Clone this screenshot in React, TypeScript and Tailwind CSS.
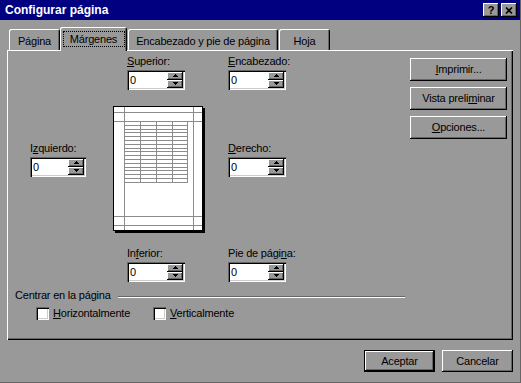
import { ReactNode } from "react";

const raised = "shadow-[inset_-1px_-1px_0_#000,inset_1px_1px_0_#fff,inset_-2px_-2px_0_#666]";
const sunken = "shadow-[inset_1px_1px_0_#666,inset_2px_2px_0_#000,inset_-1px_-1px_0_#fff,inset_-2px_-2px_0_#ccc]";

function Arrow({ up }: { up?: boolean }) {
    return (
        <svg width="5" height="3" viewBox="0 0 5 3" shapeRendering="crispEdges">
            {up ? <polygon points="0,3 2.5,0 5,3" fill="#000" /> : <polygon points="0,0 2.5,3 5,0" fill="#000" />}
        </svg>
    );
}

function SpinBox({ wide = true }: { wide?: boolean }) {
    return (
        <div className={`flex h-[20px] items-center bg-white ${sunken} ${wide ? "w-[58px]" : "w-[56px]"}`}>
            <span className="flex-1 pl-[3px] leading-none">0</span>
            <div className="mr-[2px] flex flex-col">
                <div className={`flex h-[8px] w-[16px] items-center justify-center bg-[#999] pb-[1px] ${raised}`}>
                    <Arrow up />
                </div>
                <div className={`flex h-[8px] w-[16px] items-center justify-center bg-[#999] pb-[1px] ${raised}`}>
                    <Arrow />
                </div>
            </div>
        </div>
    );
}

function Field({ label, wide, className = "" }: { label: ReactNode; wide?: boolean; className?: string }) {
    return (
        <div className={`flex flex-col ${className}`}>
            <div className="h-[13px] leading-[13px]">{label}</div>
            <div className="mt-[2px]">
                <SpinBox wide={wide} />
            </div>
        </div>
    );
}

function Button({ children, className = "", isDefault }: { children: ReactNode; className?: string; isDefault?: boolean }) {
    const border = isDefault
        ? "shadow-[inset_0_0_0_1px_#000,inset_-2px_-2px_0_#000,inset_2px_2px_0_#fff,inset_-3px_-3px_0_#666]"
        : raised;
    return (
        <div className={`flex items-center justify-center bg-[#999] leading-[13px] ${border} ${className}`}>
            {children}
        </div>
    );
}

function Check({ label }: { label: ReactNode }) {
    return (
        <div className="flex items-center">
            <div className={`h-[13px] w-[13px] bg-white ${sunken}`} />
            <span className="ml-[4px] leading-[13px]">{label}</span>
        </div>
    );
}

function PagePreview() {
    // table rows inside the printable area
    const rows = Array.from({ length: 16 }, (_, i) => 15 + i * 3.8);
    return (
        <svg width="92" height="127" viewBox="0 0 92 127" shapeRendering="crispEdges">
            <rect x="2" y="2" width="90" height="125" fill="#000" />
            <rect x="0.5" y="0.5" width="89" height="124" fill="#fff" stroke="#000" />
            <g stroke="#8c8c8c" strokeWidth="1">
                <line x1="11.5" y1="1" x2="11.5" y2="124" />
                <line x1="80.5" y1="1" x2="80.5" y2="124" />
                <line x1="1" y1="6.5" x2="89" y2="6.5" />
                <line x1="1" y1="15.5" x2="89" y2="15.5" />
                <line x1="1" y1="110.5" x2="89" y2="110.5" />
                <line x1="1" y1="119.5" x2="89" y2="119.5" />
                {[27, 43, 59, 74].map((x) => (
                    <line key={x} x1={x + 0.5} y1="15" x2={x + 0.5} y2="76" />
                ))}
                {rows.map((y, i) => (
                    <line key={i} x1="11" y1={Math.round(y) + 0.5} x2="75" y2={Math.round(y) + 0.5} />
                ))}
                <line x1="11" y1="76.5" x2="75" y2="76.5" />
            </g>
        </svg>
    );
}

export default function App() {
    return (
        <div
            className="h-[383px] w-[521px] overflow-hidden bg-[#999] text-[11px] tracking-[-0.2px] text-black shadow-[inset_-1px_-1px_0_#666]"
            style={{ fontFamily: '"Liberation Sans", Arial, sans-serif' }}
        >
            {/* Title bar */}
            <div className="flex h-[20px] w-[520px] items-center bg-[#000080] pl-[5px] pr-[3px]">
                <span className="flex-1 text-[12px] font-bold tracking-normal text-white">Configurar página</span>
                <div className={`flex h-[14px] w-[16px] items-center justify-center bg-[#999] text-[11px] font-bold leading-none ${raised}`}>
                    ?
                </div>
                <div className={`ml-[2px] flex h-[14px] w-[16px] items-center justify-center bg-[#999] ${raised}`}>
                    <svg width="8" height="7" viewBox="0 0 8 7">
                        <path d="M1 0.5 L7 6.5 M7 0.5 L1 6.5" stroke="#000" strokeWidth="1.6" />
                    </svg>
                </div>
            </div>

            {/* Tabs */}
            <div className="ml-[9px] mt-[7px] flex h-[23px] items-end">
                <div className="h-[21px] w-[51px] rounded-t-[2px] pt-[6px] text-center leading-[13px] shadow-[inset_1px_1px_0_#fff,inset_-1px_0_0_#000,inset_-2px_0_0_#666]">
                    Página
                </div>
                <div className="relative z-10 mb-[-1px] h-[24px] w-[67px] rounded-t-[2px] bg-[#999] pt-[6px] text-center leading-[13px] shadow-[inset_1px_1px_0_#fff,inset_-1px_0_0_#000,inset_-2px_0_0_#666]">
                    Márgenes
                    <div className="absolute bottom-[4px] left-[3px] right-[2px] top-[4px] border border-dotted border-black" />
                </div>
                <div className="ml-[1px] h-[21px] w-[150px] rounded-t-[2px] pt-[6px] text-center leading-[13px] shadow-[inset_1px_1px_0_#fff,inset_-1px_0_0_#000,inset_-2px_0_0_#666]">
                    Encabezado y pie de página
                </div>
                <div className="ml-[1px] h-[21px] w-[51px] rounded-t-[2px] pt-[6px] text-center leading-[13px] shadow-[inset_1px_1px_0_#fff,inset_-1px_0_0_#000,inset_-2px_0_0_#666]">
                    Hoja
                </div>
            </div>

            {/* Tab panel */}
            <div className="ml-[7px] flex h-[290px] w-[506px] shadow-[inset_1px_1px_0_#fff,inset_-1px_-1px_0_#000,inset_-2px_-2px_0_#666]">
                <div className="flex-1 pl-[8px] pt-[5px]">
                    <div className="flex">
                        <Field className="ml-[112px]" label={<><u>S</u>uperior:</>} />
                        <Field className="ml-[43px]" label={<><u>E</u>ncabezado:</>} />
                    </div>
                    <div className="mt-[16px] flex items-start">
                        <Field className="ml-[15px] mt-[36px]" wide={false} label={<>I<u>z</u>quierdo:</>} />
                        <div className="ml-[27px]">
                            <PagePreview />
                        </div>
                        <Field className="ml-[23px] mt-[36px]" label={<><u>D</u>erecho:</>} />
                    </div>
                    <div className="mt-[14px] flex">
                        <Field className="ml-[112px]" label={<>In<u>f</u>erior:</>} />
                        <Field className="ml-[43px]" label={<>Pie de pági<u>n</u>a:</>} />
                    </div>
                    <div className="mt-[7px] flex h-[13px] items-start">
                        <span className="w-[98px] whitespace-nowrap leading-[13px]">Centrar en la página</span>
                        <div className="ml-[5px] mt-[7px] h-[2px] w-[287px] border-y border-b-white border-t-[#666]" />
                    </div>
                    <div className="ml-[21px] mt-[5px] flex">
                        <div className="w-[117px]">
                            <Check label={<><u>H</u>orizontalmente</>} />
                        </div>
                        <Check label={<><u>V</u>erticalmente</>} />
                    </div>
                </div>
                <div className="mr-[6px] mt-[8px] flex flex-col gap-[6px]">
                    <Button className="h-[23px] w-[97px]"><span><u>I</u>mprimir...</span></Button>
                    <Button className="h-[23px] w-[97px]"><span>Vista preli<u>m</u>inar</span></Button>
                    <Button className="h-[23px] w-[97px]"><span><u>O</u>pciones...</span></Button>
                </div>
            </div>

            {/* Dialog buttons */}
            <div className="mr-[8px] mt-[10px] flex justify-end gap-[7px]">
                <Button isDefault className="h-[22px] w-[71px]">Aceptar</Button>
                <Button className="h-[22px] w-[71px]">Cancelar</Button>
            </div>
        </div>
    );
}
